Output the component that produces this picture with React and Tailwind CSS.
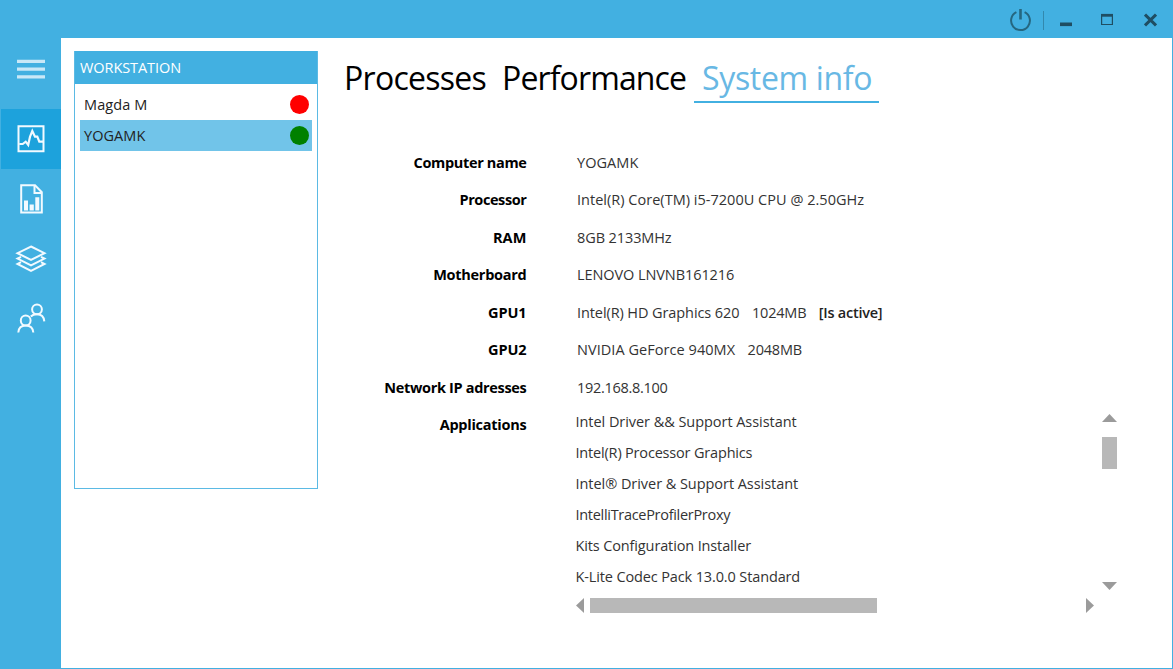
import React from 'react';

const info = [
  ['Computer name', 'YOGAMK', 'tracking-[-0.350px]', 'tracking-[0.050px]'],
  ['Processor', 'Intel(R) Core(TM) i5-7200U CPU @ 2.50GHz', 'tracking-[-0.400px]', 'tracking-[0.020px]'],
  ['RAM', '8GB 2133MHz', 'tracking-[0.100px]', 'tracking-[-0.100px]'],
  ['Motherboard', 'LENOVO LNVNB161216', 'tracking-[-0.270px]', 'tracking-[-0.080px]'],
  ['GPU1', 'Intel(R) HD Graphics 620', 'tracking-[-0.100px]', 'tracking-[-0.090px]', '1024MB', '[Is active]'],
  ['GPU2', 'NVIDIA GeForce 940MX', 'tracking-[-0.100px]', 'tracking-[0.050px]', '2048MB'],
  ['Network IP adresses', '192.168.8.100', 'tracking-[-0.320px]', 'tracking-[-0.300px]'],
];

const apps = [
  ['Intel Driver && Support Assistant', 'tracking-[-0.050px]'],
  ['Intel(R) Processor Graphics', 'tracking-[-0.180px]'],
  ['Intel® Driver & Support Assistant', 'tracking-[-0.050px]'],
  ['IntelliTraceProfilerProxy', 'tracking-[-0.300px]'],
  ['Kits Configuration Installer', 'tracking-[-0.130px]'],
  ['K-Lite Codec Pack 13.0.0 Standard', 'tracking-[-0.130px]'],
];

function TitleBar() {
  return (
    <header className="flex h-[38px] shrink-0 items-center justify-end bg-[#42b0e1] pt-0.5">
      <svg width="24" height="24" viewBox="0 0 24 24" fill="none" stroke="#256780" strokeWidth="2">
        <path d="M7.400 4.200A9.400 9.400 0 1 0 15.600 4.200" />
        <path d="M11.500 1v10.500" strokeWidth="2.600" />
      </svg>
      <span className="ml-[10px] h-[19px] w-px bg-[#3288ad]" />
      <svg className="ml-[16px]" width="12" height="20" viewBox="0 0 12 20" fill="#1f4e63">
        <path d="M0 12.500h12v3.600h-12z" />
      </svg>
      <svg className="ml-[29px]" width="12" height="20" viewBox="0 0 12 20" fill="none" stroke="#1f4e63">
        <path d="M.6 4.500h10.800v10h-10.800z" strokeWidth="1.200" />
        <path d="M0 5.300h12" strokeWidth="2.800" />
      </svg>
      <svg className="mr-[16px] ml-[31px]" width="13" height="20" viewBox="0 0 13 20" fill="none" stroke="#1f4e63" strokeWidth="3">
        <path d="M1 4.600l11 10.800M12 4.600l-11 10.800" />
      </svg>
    </header>
  );
}

function NavItem({ active, children }) {
  return (
    <div className={`ml-px flex h-[60px] items-center justify-center ${active ? 'bg-[#1da2dc]' : ''}`}>
      <svg width="32" height="32" viewBox="0 0 32 32" fill="none" stroke="#f2faff" strokeWidth="2">
        {children}
      </svg>
    </div>
  );
}

function Sidebar() {
  return (
    <nav className="w-[61px] shrink-0 bg-[#42b0e1]">
      <div className="flex h-[71px] justify-center pt-[21px] pl-px">
        <svg width="28" height="20" viewBox="0 0 28 20" fill="#c9e8f7">
          <path d="M0 .8h28v3.200h-28zM0 8.600h28v3.200h-28zM0 16.200h28v3.200h-28z" />
        </svg>
      </div>
      <NavItem active>
        <path d="M3.500 3.300h25v25h-25z" />
        <path d="M4.300 21h3.400l3-2.300 2.500 3.300 1.800-8.300 2.300-5.700 2.700 5.700h2.300l2 5h4.200" strokeWidth="2.200" />
      </NavItem>
      <NavItem>
        <path d="M6.200 2.200h13.800l6.800 7v20.400h-20.600z" />
        <path d="M19.500 2.200v7.800h7.300" />
        <path d="M9 17.500h4v10h-4zM14.600 21.500h4.200v6h-4.200zM20.300 14.300h4v13.200h-4z" fill="#f2faff" stroke="none" />
      </NavItem>
      <NavItem>
        <path d="M16 3.500l13.500 6.700-13.500 6.700-13.500-6.700z" />
        <path d="M6 13.800l-3.500 1.800 13.500 6.800 13.500-6.800-3.500-1.800M6 19.200l-3.500 1.800 13.500 6.900 13.500-6.900-3.500-1.800" />
      </NavItem>
      <NavItem>
        <circle cx="10.700" cy="17.500" r="4.900" />
        <circle cx="22" cy="6.300" r="4.900" />
        <path d="M3.300 29.500c.3-4.500 3-7 7.400-7s7.300 2.500 7.600 7M15.800 13.500c1.500-1.500 3.400-2.200 6.200-2.200 4.300 0 6.900 2.300 7.300 7" />
      </NavItem>
    </nav>
  );
}

function Workstations() {
  return (
    <section className="mt-[13px] ml-[13px] flex h-[438px] w-[244px] shrink-0 flex-col border border-[#5bbae4]">
      <h2 className="-mt-px h-[33px] bg-[#42b0e1] pl-[5px] leading-[34px] tracking-[-0.070px] text-white">WORKSTATION</h2>
      <div className="mx-[5px] mt-[5px] text-[#222]">
        <div className="flex h-[31px] items-center justify-between pr-[3px] pl-1">
          <span className="tracking-[0.100px]">Magda M</span>
          <span className="size-[19px] rounded-full bg-[#ff0000]" />
        </div>
        <div className="flex h-[31px] items-center justify-between bg-[#71c4e9] pr-[3px] pl-1">
          <span className="tracking-[0.050px]">YOGAMK</span>
          <span className="size-[19px] rounded-full bg-[#008000]" />
        </div>
      </div>
    </section>
  );
}

function Applications() {
  return (
    <div className="flex w-[541px]">
      <div className="w-[518px]">
        <ul className="h-[188px] overflow-hidden">
          {apps.map(([name, spacing]) => (
            <li key={name} className={`h-[31.200px] leading-[31px] whitespace-nowrap ${spacing}`}>{name}</li>
          ))}
        </ul>
        <div className="mt-[4px] flex h-[15px] items-center">
          <svg width="8" height="15" viewBox="0 0 8 15" fill="#9b9b9b"><path d="M8 0v15l-8-7.500z" /></svg>
          <span className="ml-[6px] h-[15px] w-[287px] bg-[#b8b8b8]" />
          <svg className="ml-auto" width="8" height="15" viewBox="0 0 8 15" fill="#9b9b9b"><path d="M0 0v15l8-7.500z" /></svg>
        </div>
      </div>
      <div className="flex h-[188px] w-[23px] flex-col items-end pt-[8px]">
        <svg width="15" height="8" viewBox="0 0 15 8" fill="#9b9b9b"><path d="M0 8h15l-7.500-8z" /></svg>
        <span className="mt-[15px] h-[32px] w-[15px] bg-[#b8b8b8]" />
        <svg className="mt-auto mb-[4px]" width="15" height="8" viewBox="0 0 15 8" fill="#9b9b9b"><path d="M0 0h15l-7.500 8z" /></svg>
      </div>
    </div>
  );
}

function SystemInfo() {
  return (
    <main className="ml-[26px] flex-1 pt-[13px]">
      <div className="flex h-[52px] text-[32px] leading-[54px] whitespace-nowrap text-black">
        <span className="w-[158px] tracking-[-0.720px]">Processes</span>
        <span className="w-[192px] tracking-[-0.870px]">Performance</span>
        <span className="w-[185px] border-b-2 border-[#42b0e1] pl-[8px] tracking-[-0.330px] text-[#68b8e4]">System info</span>
      </div>
      <div className="mt-[40.800px] text-[#333]">
        {info.map(([label, value, labelSpacing, valueSpacing, memory, status]) => (
          <div key={label} className="flex h-[37.500px] items-center whitespace-pre">
            <span className={`w-[182.500px] text-right font-bold text-black ${labelSpacing}`}>{label}</span>
            <span className={`ml-[50.500px] ${valueSpacing}`}>{value}</span>
            {memory && <span className="ml-[12.500px] tracking-[-0.200px]">{memory}</span>}
            {status && <span className="ml-[12.500px] font-semibold tracking-[-0.250px] text-[#222]">{status}</span>}
          </div>
        ))}
        <div className="-mt-[0.800px] flex">
          <span className="w-[182.500px] text-right leading-[37px] font-bold tracking-[-0.250px] text-black">Applications</span>
          <div className="ml-[49px]"><Applications /></div>
        </div>
      </div>
    </main>
  );
}

export default function App() {
  return (
    <div className="flex h-[669px] w-[1173px] flex-col overflow-hidden bg-white font-['Open_Sans',sans-serif] text-[14.500px]">
      <TitleBar />
      <div className="flex min-h-0 flex-1">
        <Sidebar />
        <div className="flex min-w-0 flex-1 border-r border-b border-[#42b0e1]">
          <Workstations />
          <SystemInfo />
        </div>
      </div>
    </div>
  );
}
